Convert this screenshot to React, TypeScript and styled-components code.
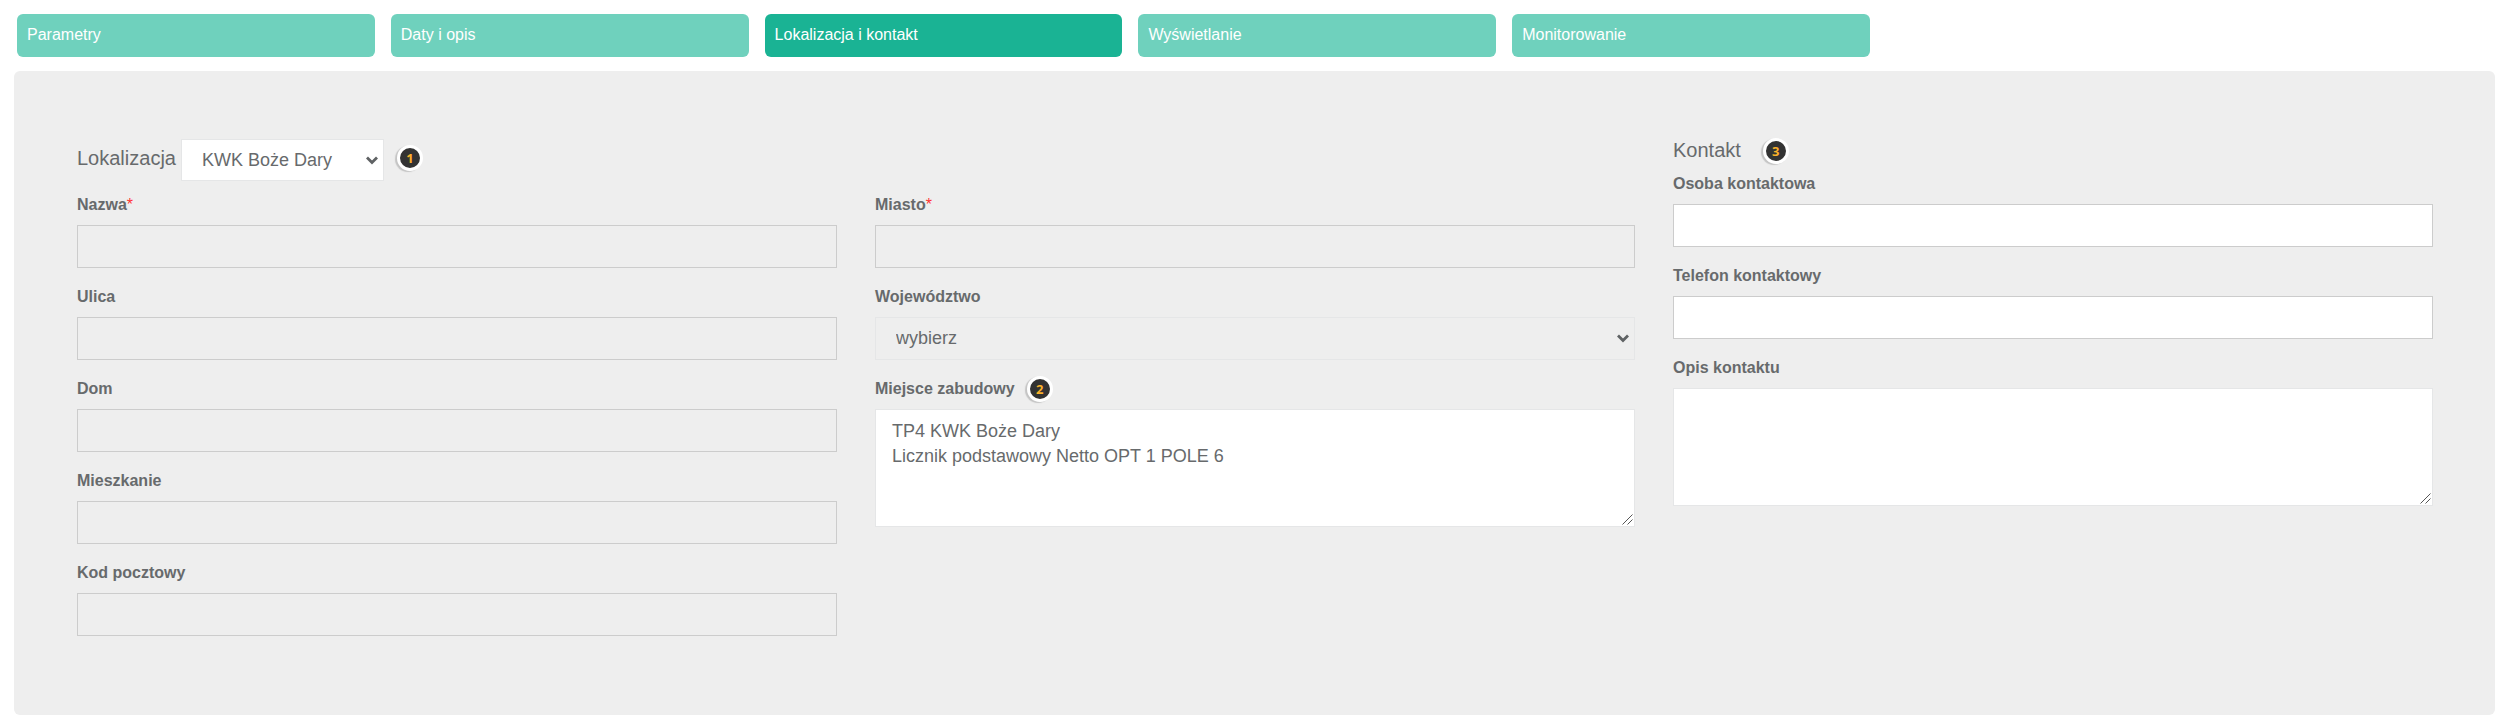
import React from "react";
import styled, { createGlobalStyle, css } from "styled-components";

const GlobalStyle = createGlobalStyle`
  *, *::before, *::after { box-sizing: border-box; }
  body {
    margin: 0;
    background: #fff;
    color: #676a6c;
    font-family: "Liberation Sans", Arial, sans-serif;
    font-size: 16px;
    line-height: 24px;
  }
`;

const Page = styled.main`
  padding: 14px 18px 1px 14px;
`;

const Tabs = styled.nav`
  display: flex;
  margin: 0 -6px 14px -5px;
`;

const TabItem = styled.div`
  flex: 0 0 15%;
  padding: 0 8px;
`;

const Tab = styled.button<{ $active: boolean }>`
  display: block;
  width: 100%;
  height: 43px;
  padding: 0 10px 2px;
  border: 0;
  border-radius: 6px;
  background: ${(p) => (p.$active ? "#1ab394" : "#6fd1bd")};
  color: #fff;
  font: inherit;
  text-align: left;
  cursor: pointer;
`;

const Panel = styled.form`
  display: grid;
  grid-template-columns: repeat(3, minmax(0, 1fr));
  column-gap: 38px;
  padding: 68px 62px 62px 63px;
  border-radius: 6px;
  background: #eee;
`;

const Location = styled.fieldset`
  grid-column: span 2;
  min-width: 0;
  margin: 0;
  padding: 0;
  border: 0;
`;

const Columns = styled.div`
  display: grid;
  grid-template-columns: repeat(2, minmax(0, 1fr));
  column-gap: 38px;
`;

const Column = styled.div`
  min-width: 0;
`;

const LocationHeading = styled.div`
  display: flex;
  align-items: center;
  height: 42px;
  margin-bottom: 12px;
`;

const ContactHeading = styled.div`
  display: flex;
  align-items: center;
  height: 24px;
  margin-bottom: 9px;
`;

const titleText = css`
  font-size: 20px;
  font-weight: 400;
  line-height: 24px;
`;

const TitleLabel = styled.label`
  ${titleText}
  margin: 0 5px 4px 0;
`;

const Title = styled.h2`
  ${titleText}
  margin: 0 22px 2px 0;
`;

const Badge = styled.span`
  display: flex;
  flex: none;
  align-items: center;
  justify-content: center;
  width: 26px;
  height: 26px;
  border: 3px solid #fff;
  border-radius: 50%;
  background: #333;
  box-shadow: -2px 1px 1px #c4c4c4;
  color: #fbb12a;
  font: 700 13px/20px "Open Sans", sans-serif;
`;

const HeadingBadge = styled(Badge)`
  margin: 0 0 4px 13px;
`;

const Field = styled.div`
  margin-bottom: 17px;
`;

const LabelRow = styled.div`
  display: flex;
  align-items: center;
  gap: 12px;
  height: 24px;
  margin-bottom: 8px;
`;

const Label = styled.label`
  font-weight: 700;
`;

const Required = styled.span`
  color: #f33;
  font-weight: 400;
`;

const control = css`
  display: block;
  width: 100%;
  border: 1px solid #e5e6e7;
  border-radius: 0;
  background: #fff;
  color: #676a6c;
  font: 18px/25px "Liberation Sans", Arial, sans-serif;
  opacity: 1;
  &:disabled { background: #eee; }
`;

const Input = styled.input`
  ${control}
  height: 43px;
  padding: 8px 16px;
  border-color: #ccc;
`;

const ControlBox = styled.div<{ $width?: string }>`
  position: relative;
  width: ${(p) => p.$width ?? "100%"};
`;

const Select = styled.select`
  ${control}
  height: 42px;
  padding: 0 30px 0 20px;
  appearance: none;
`;

const FormSelect = styled(Select)`
  height: 43px;
`;

const Chevron = styled.svg`
  position: absolute;
  right: 6px;
  top: 17px;
  width: 12px;
  height: 9px;
  pointer-events: none;
`;

const TextArea = styled.textarea`
  ${control}
  height: 118px;
  padding: 9px 16px 8px;
  resize: vertical;
  &::-webkit-resizer { display: none; }
`;

const Grip = styled.svg`
  position: absolute;
  right: 2px;
  bottom: 2px;
  width: 11px;
  height: 11px;
  pointer-events: none;
`;

const Arrow = () => (
  <Chevron viewBox="0 0 12 9" aria-hidden="true">
    <path d="M1 1.5 6 6.5 11 1.5" fill="none" stroke="#5f6264" strokeWidth="2.8" />
  </Chevron>
);

const ResizeGrip = () => (
  <Grip viewBox="0 0 11 11" aria-hidden="true">
    <path d="M.5 10.5 10.5 .5M5.5 10.5 10.5 5.5" stroke="#555" strokeWidth="1" />
  </Grip>
);

type FieldProps = {
  id: string;
  label: string;
  required?: boolean;
  badge?: number;
  children: React.ReactNode;
};

const FormField = ({ id, label, required, badge, children }: FieldProps) => (
  <Field>
    <LabelRow>
      <Label htmlFor={id}>
        {label}
        {required && <Required>*</Required>}
      </Label>
      {badge && <Badge>{badge}</Badge>}
    </LabelRow>
    {children}
  </Field>
);

const tabs = ["Parametry", "Daty i opis", "Lokalizacja i kontakt", "Wyświetlanie", "Monitorowanie"];

const addressFields = [
  { id: "nazwa", label: "Nazwa", required: true },
  { id: "ulica", label: "Ulica" },
  { id: "dom", label: "Dom" },
  { id: "mieszkanie", label: "Mieszkanie" },
  { id: "kod", label: "Kod pocztowy" },
];

const contactFields = [
  { id: "osoba", label: "Osoba kontaktowa" },
  { id: "telefon", label: "Telefon kontaktowy" },
];

export default function App() {
  return (
    <>
      <GlobalStyle />
      <Page>
        <Tabs>
          {tabs.map((name, i) => (
            <TabItem key={name}>
              <Tab type="button" $active={i === 2} aria-current={i === 2 ? "step" : undefined}>
                {name}
              </Tab>
            </TabItem>
          ))}
        </Tabs>
        <Panel>
          <Location>
            <LocationHeading>
              <TitleLabel htmlFor="lokalizacja">Lokalizacja</TitleLabel>
              <ControlBox $width="203px">
                <Select id="lokalizacja">
                  <option>KWK Boże Dary</option>
                </Select>
                <Arrow />
              </ControlBox>
              <HeadingBadge>1</HeadingBadge>
            </LocationHeading>
            <Columns>
              <Column>
                {addressFields.map((f) => (
                  <FormField key={f.id} {...f}>
                    <Input id={f.id} type="text" disabled />
                  </FormField>
                ))}
              </Column>
              <Column>
                <FormField id="miasto" label="Miasto" required>
                  <Input id="miasto" type="text" disabled />
                </FormField>
                <FormField id="wojewodztwo" label="Województwo">
                  <ControlBox>
                    <FormSelect id="wojewodztwo" disabled>
                      <option>wybierz</option>
                    </FormSelect>
                    <Arrow />
                  </ControlBox>
                </FormField>
                <FormField id="miejsce" label="Miejsce zabudowy" badge={2}>
                  <ControlBox>
                    <TextArea
                      id="miejsce"
                      defaultValue={"TP4 KWK Boże Dary\nLicznik podstawowy Netto OPT 1 POLE 6"}
                    />
                    <ResizeGrip />
                  </ControlBox>
                </FormField>
              </Column>
            </Columns>
          </Location>
          <Column>
            <ContactHeading>
              <Title>Kontakt</Title>
              <Badge>3</Badge>
            </ContactHeading>
            {contactFields.map((f) => (
              <FormField key={f.id} {...f}>
                <Input id={f.id} type="text" />
              </FormField>
            ))}
            <FormField id="opis" label="Opis kontaktu">
              <ControlBox>
                <TextArea id="opis" />
                <ResizeGrip />
              </ControlBox>
            </FormField>
          </Column>
        </Panel>
      </Page>
    </>
  );
}
